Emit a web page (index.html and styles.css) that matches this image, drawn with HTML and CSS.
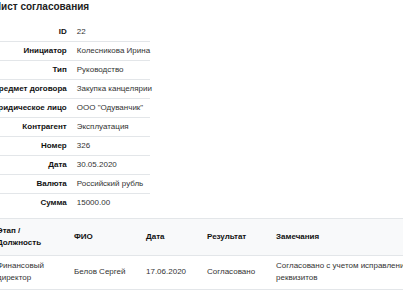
FILE: index.html
```html
<!DOCTYPE html>
<html lang="ru">
<head>
<meta charset="utf-8">
<link rel="stylesheet" href="styles.css">
</head>
<body>
<div class="page">
  <h1 class="title">Лист согласования</h1>
  <table class="info">
    <tbody>
      <tr><th>ID</th><td>22</td></tr>
      <tr><th>Инициатор</th><td>Колесникова Ирина</td></tr>
      <tr><th>Тип</th><td>Руководство</td></tr>
      <tr><th>Предмет договора</th><td>Закупка канцелярии</td></tr>
      <tr><th>Юридическое лицо</th><td>ООО "Одуванчик"</td></tr>
      <tr><th>Контрагент</th><td>Эксплуатация</td></tr>
      <tr><th>Номер</th><td>326</td></tr>
      <tr><th>Дата</th><td>30.05.2020</td></tr>
      <tr><th>Валюта</th><td>Российский рубль</td></tr>
      <tr><th>Сумма</th><td>15000.00</td></tr>
    </tbody>
  </table>
  <table class="steps">
    <colgroup>
      <col class="s1"><col class="s2"><col class="s3"><col class="s4"><col class="s5">
    </colgroup>
    <thead>
      <tr><th>Этап / Должность</th><th>ФИО</th><th>Дата</th><th>Результат</th><th>Замечания</th></tr>
    </thead>
    <tbody>
      <tr><td>Финансовый директор</td><td>Белов Сергей</td><td>17.06.2020</td><td>Согласовано</td><td>Согласовано с учетом исправления реквизитов</td></tr>
    </tbody>
  </table>
</div>
</body>
</html>
```
FILE: styles.css
```css
html, body {
  margin: 0;
  padding: 0;
  overflow: hidden;
  background: #fff;
}
body {
  font-family: "Liberation Sans", Arial, sans-serif;
  color: #212529;
}
.page {
  margin-left: -9px;
  width: 480px;
}
.title {
  margin: 0;
  padding-left: 3px;
  font-size: 10px;
  line-height: 14px;
  font-weight: bold;
  color: #222;
}
.info {
  margin: 9px 0 0 -6px;
  border-collapse: collapse;
  font-size: 8px;
  line-height: 10px;
}
.info th, .info td {
  padding: 4px 5px;
  border-top: 1px solid #e3e6e9;
  white-space: nowrap;
}
.info tr:first-child th, .info tr:first-child td { border-top: none; }
.info th {
  text-align: right;
  font-weight: bold;
  color: #111;
}
.info td {
  width: 68px;
  max-width: 68px;
  text-align: left;
  color: #333;
}
.steps {
  margin-top: 6px;
  border-collapse: collapse;
  table-layout: fixed;
  width: 430px;
  font-size: 8px;
  line-height: 12px;
}
.steps .s1 { width: 77px; }
.steps .s2 { width: 72px; }
.steps .s3 { width: 61px; }
.steps .s4 { width: 69px; }
.steps .s5 { width: 151px; }
.steps th, .steps td {
  text-align: left;
  vertical-align: middle;
  border-top: 1px solid #e3e6e9;
  border-bottom: 1px solid #e3e6e9;
}
.steps th {
  padding: 6px 6px;
  background: #f8f9fa;
  font-weight: bold;
  color: #111;
}
.steps td {
  padding: 4px 6px 5px;
  color: #333;
}
```
